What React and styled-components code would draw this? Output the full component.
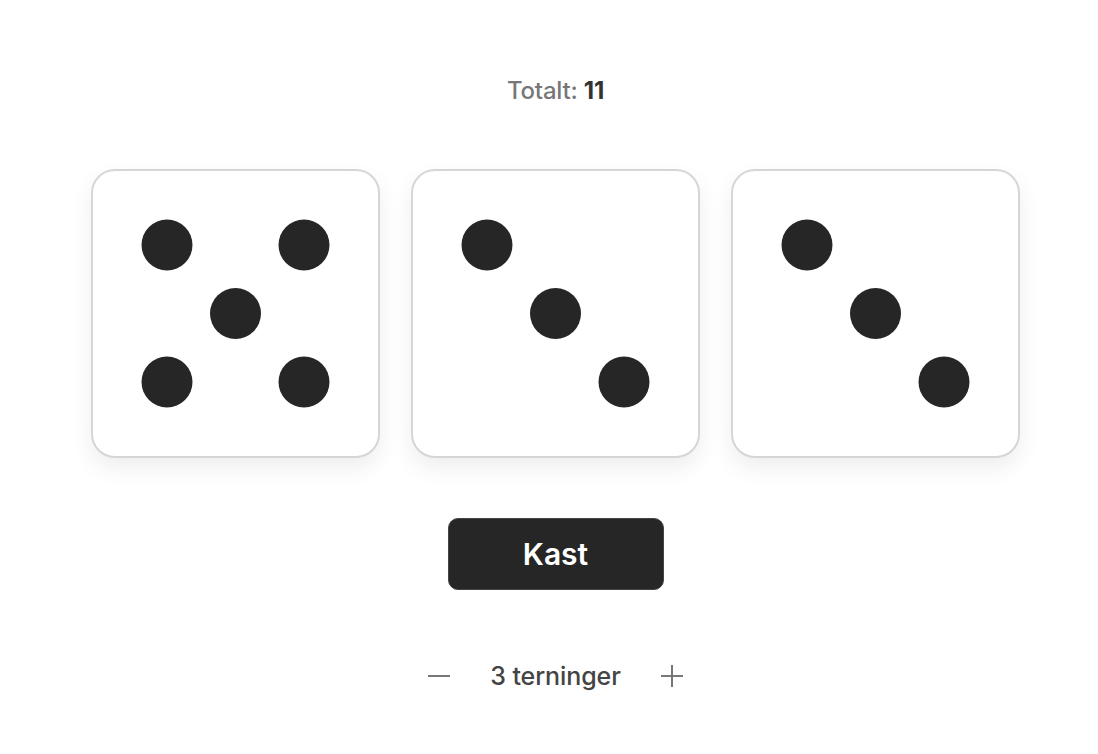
import styled, { createGlobalStyle } from "styled-components";

const GlobalStyle = createGlobalStyle`
    html, body {
        margin: 0;
        background: #fff;
        font-family: "Inter", "Noto Sans", sans-serif;
    }
`;

const PIPS = {
    1: [[0, 0]],
    2: [[-1, -1], [1, 1]],
    3: [[-1, -1], [0, 0], [1, 1]],
    4: [[-1, -1], [1, -1], [-1, 1], [1, 1]],
    5: [[-1, -1], [1, -1], [0, 0], [-1, 1], [1, 1]],
    6: [[-1, -1], [1, -1], [-1, 0], [1, 0], [-1, 1], [1, 1]],
};

const Die = ({ value }) => {
    return (
        <StDie>
            <svg width="285" height="285" viewBox="-142.5 -142.5 285 285">
                {PIPS[value].map(([x, y], i) => (
                    <circle key={i} cx={x * 68.5} cy={y * 68.5} r="25.5" fill="#262626" />
                ))}
            </svg>
        </StDie>
    );
};

const App = () => {
    const dice = [5, 3, 3];
    const total = dice.reduce((a, b) => a + b, 0);

    return (
        <StPage>
            <GlobalStyle />
            <StTotal>
                Totalt: <b>{total}</b>
            </StTotal>
            <StDiceRow>
                {dice.map((d, i) => (
                    <Die key={i} value={d} />
                ))}
            </StDiceRow>
            <StRollButton>Kast</StRollButton>
            <StCounter>
                <StStep aria-label="færre">
                    <svg width="24" height="24" viewBox="0 0 24 24">
                        <path d="M1 12h22" stroke="#777" strokeWidth="2" />
                    </svg>
                </StStep>
                <span>{dice.length} terninger</span>
                <StStep aria-label="flere">
                    <svg width="24" height="24" viewBox="0 0 24 24">
                        <path d="M1 12h22M12 1v22" stroke="#777" strokeWidth="2" />
                    </svg>
                </StStep>
            </StCounter>
        </StPage>
    );
};

export default App;

const StPage = styled.div`
    display: flex;
    flex-direction: column;
    align-items: center;
    padding: 76px 0 0 13px;
`;

const StTotal = styled.div`
    font-size: 24px;
    font-weight: 500;
    color: #777;
    letter-spacing: -0.2px;
    line-height: 30px;

    b {
        color: #333;
        font-weight: 700;
    }
`;

const StDiceRow = styled.div`
    display: flex;
    gap: 31px;
    margin-top: 63px;
`;

const StDie = styled.div`
    width: 285px;
    height: 285px;
    border: 2px solid #d6d6d6;
    border-radius: 24px;
    background: #fff;
    box-shadow: 0 10px 22px rgba(0, 0, 0, 0.07);

    svg {
        display: block;
    }
`;

const StRollButton = styled.button`
    margin-top: 60px;
    width: 216px;
    height: 72px;
    border: 1px solid #444;
    border-radius: 10px;
    background: #262626;
    color: #fff;
    font-family: inherit;
    font-size: 30px;
    font-weight: 600;
    cursor: pointer;
`;

const StCounter = styled.div`
    display: flex;
    align-items: center;
    gap: 39px;
    margin-top: 71px;
    font-size: 25px;
    font-weight: 500;
    color: #444;
    letter-spacing: -0.1px;
`;

const StStep = styled.button`
    display: flex;
    padding: 0;
    border: none;
    background: none;
    cursor: pointer;
`;
